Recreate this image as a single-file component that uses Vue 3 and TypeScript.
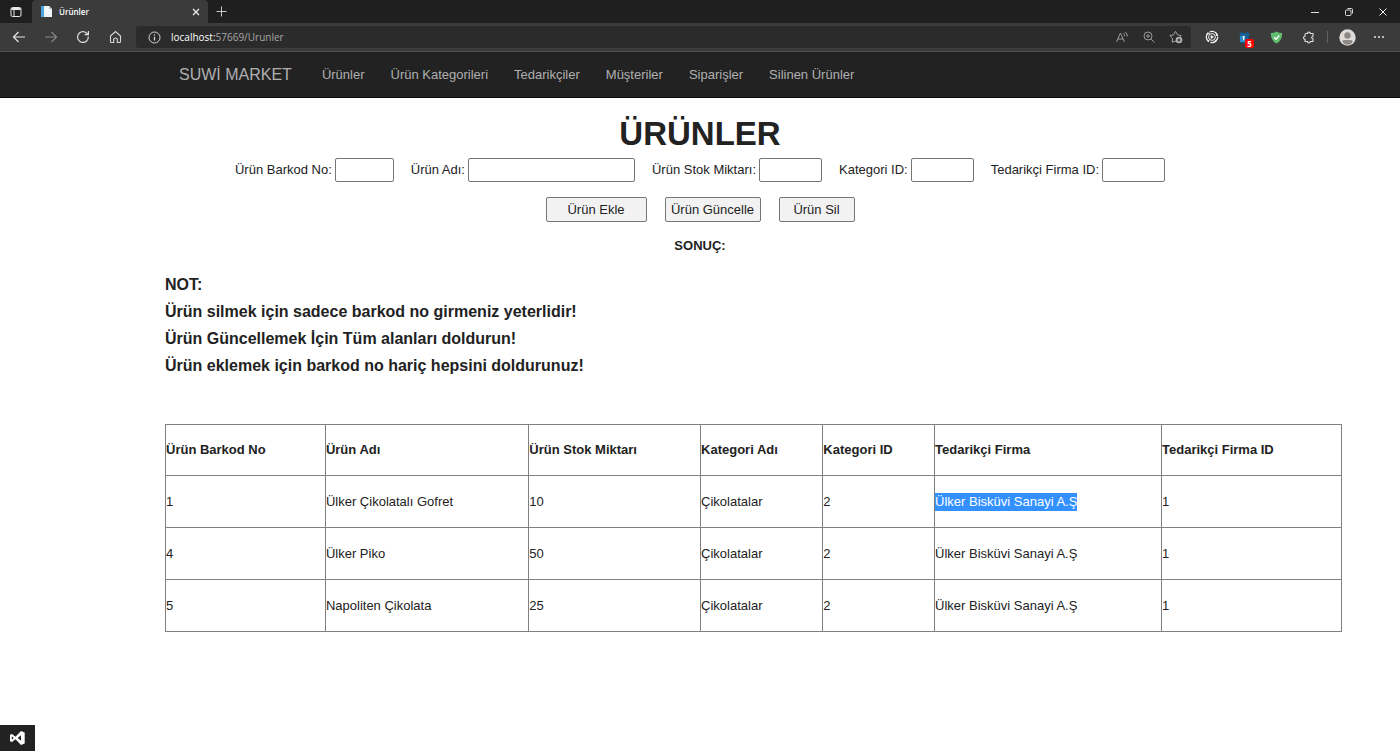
<script setup lang="ts">
import { ref } from 'vue'

interface Field {
  id: string
  label: string
  size: 'small' | 'medium' | 'large'
}

interface Product {
  barcode: number
  name: string
  stock: number
  category: string
  categoryId: number
  supplier: string
  supplierId: number
}

const navLinks: string[] = ['Ürünler', 'Ürün Kategorileri', 'Tedarikçiler', 'Müşteriler', 'Siparişler', 'Silinen Ürünler']

const fields: Field[] = [
  { id: 'barkod', label: 'Ürün Barkod No:', size: 'small' },
  { id: 'ad', label: 'Ürün Adı:', size: 'large' },
  { id: 'stok', label: 'Ürün Stok Miktarı:', size: 'medium' },
  { id: 'kategori', label: 'Kategori ID:', size: 'medium' },
  { id: 'firma', label: 'Tedarikçi Firma ID:', size: 'medium' },
]

const values = ref<Record<string, string>>({ barkod: '', ad: '', stok: '', kategori: '', firma: '' })

const notes: string[] = [
  'NOT:',
  'Ürün silmek için sadece barkod no girmeniz yeterlidir!',
  'Ürün Güncellemek İçin Tüm alanları doldurun!',
  'Ürün eklemek için barkod no hariç hepsini doldurunuz!',
]

const headers: string[] = ['Ürün Barkod No', 'Ürün Adı', 'Ürün Stok Miktarı', 'Kategori Adı', 'Kategori ID', 'Tedarikçi Firma', 'Tedarikçi Firma ID']

const products: Product[] = [
  { barcode: 1, name: 'Ülker Çikolatalı Gofret', stock: 10, category: 'Çikolatalar', categoryId: 2, supplier: 'Ülker Bisküvi Sanayi A.Ş', supplierId: 1 },
  { barcode: 4, name: 'Ülker Piko', stock: 50, category: 'Çikolatalar', categoryId: 2, supplier: 'Ülker Bisküvi Sanayi A.Ş', supplierId: 1 },
  { barcode: 5, name: 'Napoliten Çikolata', stock: 25, category: 'Çikolatalar', categoryId: 2, supplier: 'Ülker Bisküvi Sanayi A.Ş', supplierId: 1 },
]

const highlighted = 1
</script>

<template>
  <div class="window">
    <div class="tabstrip">
      <button class="tab-actions" aria-label="Sekme eylemleri">
        <svg width="12" height="12" viewBox="0 0 12 12" fill="none" stroke="#e8e8e8">
          <rect x="1" y="1.5" width="10" height="9" rx="1.5" />
          <path d="M1.5 3h9" stroke-width="2" />
          <path d="M4 3v7.5" />
        </svg>
      </button>
      <div class="tab">
        <svg width="13" height="13" viewBox="0 0 13 13">
          <path d="M1 1h8l3 3v8H1z" fill="#eef3f8" />
          <path d="M1 1h3v11H1z" fill="#4ba3dc" />
          <path d="M9 1v3h3z" fill="#b9c6d2" />
          <path d="M5.500 3.500h2M5.500 5.500h4M5.500 7.500h4" stroke="#fff" />
        </svg>
        <span class="tab-title">Ürünler</span>
        <button class="tab-close" aria-label="Sekmeyi kapat">
          <svg width="8" height="8" viewBox="0 0 8 8" stroke="#f0f0f0" stroke-width="1.200"><path d="M1 1l6 6M7 1L1 7" /></svg>
        </button>
      </div>
      <button class="new-tab" aria-label="Yeni sekme">
        <svg width="11" height="11" viewBox="0 0 11 11" stroke="#c8c8c8"><path d="M5.500 0.500v10M0.500 5.500h10" /></svg>
      </button>
      <div class="window-buttons">
        <button aria-label="Simge durumuna küçült">
          <svg width="8" height="8" viewBox="0 0 8 8" stroke="#e4e4e4"><path d="M0 4.500h8" /></svg>
        </button>
        <button aria-label="Geri yükle">
          <svg width="8" height="8" viewBox="0 0 8 8" fill="none" stroke="#d8d8d8">
            <rect x="0.500" y="2" width="5.500" height="5.500" rx="1" />
            <path d="M2.500 0.500h4q1 0 1 1v4" />
          </svg>
        </button>
        <button aria-label="Kapat">
          <svg width="8" height="8" viewBox="0 0 8 8" stroke="#f0f0f0"><path d="M0.500 0.500l7 7M7.500 0.500l-7 7" /></svg>
        </button>
      </div>
    </div>

    <div class="toolbar">
      <button class="tool" aria-label="Geri">
        <svg width="14" height="12" viewBox="0 0 14 12" fill="none" stroke="#e6e6e6" stroke-width="1.200"><path d="M13 6H1.500M6.500 1l-5 5 5 5" /></svg>
      </button>
      <button class="tool" aria-label="İleri">
        <svg width="14" height="12" viewBox="0 0 14 12" fill="none" stroke="#858585" stroke-width="1.200"><path d="M1 6h11.500M7.500 1l5 5-5 5" /></svg>
      </button>
      <button class="tool" aria-label="Yenile">
        <svg width="14" height="14" viewBox="0 0 14 14" fill="none" stroke="#e0e0e0" stroke-width="1.200">
          <path d="M12.300 6.500A5.400 5.400 0 1 1 10.500 3L12.300 4.600" />
          <path d="M12.400 1v3.700H8.700" />
        </svg>
      </button>
      <button class="tool" aria-label="Giriş">
        <svg width="13" height="14" viewBox="0 0 13 14" fill="none" stroke="#d8d8d8" stroke-width="1.100">
          <path d="M1.500 6L6.500 1.500 11.500 6v5.500q0 1-1 1H8.300V9.300Q8.300 8 6.500 8T4.700 9.300v3.200H2.500q-1 0-1-1z" />
        </svg>
      </button>

      <div class="address">
        <svg class="info" width="13" height="13" viewBox="0 0 13 13" fill="none" stroke="#d8d8d8">
          <circle cx="6.500" cy="6.500" r="5.500" />
          <path d="M6.500 5.700v3.800M6.500 3.300v1.300" stroke-width="1.200" />
        </svg>
        <div class="url" role="textbox" aria-label="Adres" contenteditable="true"><span class="host">localhost:</span><span>57669/Urunler</span></div>
        <button class="inner-tool" aria-label="Sesli oku">
          <svg width="14" height="13" viewBox="0 0 14 13" fill="none" stroke="#999">
            <path d="M1.500 11L5.500 2l4 9M2.800 8h5.400M8.500 2.200q1.300 1 1.200 3M10.300 1q2.200 1.500 2 4.500" />
          </svg>
        </button>
        <button class="inner-tool" aria-label="Yakınlaştır">
          <svg width="12" height="12" viewBox="0 0 12 12" fill="none" stroke="#999">
            <circle cx="5" cy="5" r="4" />
            <path d="M8 8l3.500 3.500M3 5h4M5 3v4" />
          </svg>
        </button>
        <button class="inner-tool" aria-label="Sık kullanılanlara ekle">
          <svg width="14" height="14" viewBox="0 0 14 14" fill="none" stroke="#a4a4a4">
            <path d="M7 11L3.200 12.200 3.500 8.500 1 5.500l3.700-.7L6.500 1.300l2 3.500 3.700.7-1.200 1.300" />
            <circle cx="10" cy="10" r="3.300" fill="#b4b4b4" stroke="none" />
            <path d="M8.300 10h3.400M10 8.300v3.400" stroke="#2b2b2b" />
          </svg>
        </button>
      </div>

      <div class="extensions">
        <button class="tool" aria-label="Video uzantısı">
          <svg width="14" height="14" viewBox="0 0 14 14" fill="none" stroke="#f2f2f2">
            <circle cx="7" cy="7" r="5.700" stroke-width="1.300" stroke-dasharray="10.400 1.540" />
            <circle cx="7" cy="7" r="3.400" />
            <path d="M5.800 5l3.200 2-3.200 2z" fill="#fff" stroke="none" />
            <path d="M2 4.500l3-1.500M11 3l.8 3M2.500 11l2-.8M9.500 11.200l2.500-1.700" />
          </svg>
        </button>
        <button class="tool badge-host" aria-label="Uzantı, 5 bildirim">
          <svg width="13" height="13" viewBox="0 0 13 13">
            <path d="M1 3l3-2 2.500 1.500L9 1l3 2-1.500 3v6h-8V6z" fill="#175f91" />
            <path d="M2 5h5v6H2z" fill="#248ccb" />
            <path d="M4.500 5.500l2-1V8L5 10V7z" fill="#fff" />
          </svg>
          <span class="badge">5</span>
        </button>
        <button class="tool" aria-label="Koruma">
          <svg width="13" height="13" viewBox="0 0 13 13">
            <path d="M6.500.5Q9 2 12.200 2 12.500 9.500 6.500 12.500.5 9.500.8 2 4 2 6.500.5z" fill="#62bd70" />
            <path d="M4 6.300l2 2 3.300-3.800" fill="none" stroke="#fff" stroke-width="1.300" />
          </svg>
        </button>
        <button class="tool" aria-label="Uzantılar">
          <svg width="13" height="13" viewBox="0 0 13 13" fill="none" stroke="#dedede" stroke-width="1.100">
            <path d="M4 2.500h1.500a1.400 1.400 0 0 1 2.800 0H11v2.700a1.300 1.300 0 0 0 0 2.600v2.700H8.300a1.400 1.400 0 0 1-2.800 0H3V8.300a1.500 1.500 0 0 1 0-3V3.500q0-1 1-1z" />
          </svg>
        </button>
        <span class="separator"></span>
        <button class="tool" aria-label="Profil">
          <svg width="17" height="17" viewBox="0 0 17 17">
            <circle cx="8.500" cy="8.500" r="8.200" fill="#dedbd8" />
            <circle cx="8.500" cy="6.500" r="3.200" fill="#8d8986" />
            <path d="M3.500 12.500q0-1.500 1.500-1.500h7q1.500 0 1.500 1.500-1.500 3.300-5 3.300t-5-3.300z" fill="#8d8986" />
          </svg>
        </button>
        <button class="tool" aria-label="Ayarlar">
          <svg width="12" height="4" viewBox="0 0 12 4" fill="#e6e6e6"><circle cx="2" cy="2" r="1" /><circle cx="6" cy="2" r="1" /><circle cx="10" cy="2" r="1" /></svg>
        </button>
      </div>
    </div>

    <nav class="navbar">
      <div class="container nav-inner">
        <a class="brand" href="#">SUWİ MARKET</a>
        <a v-for="link in navLinks" :key="link" href="#">{{ link }}</a>
      </div>
    </nav>

    <main class="container">
      <h1>ÜRÜNLER</h1>
      <form @submit.prevent>
        <div class="fields">
          <div v-for="field in fields" :key="field.id" class="field">
            <label :for="field.id">{{ field.label }}</label>
            <input :id="field.id" v-model="values[field.id]" type="text" :class="field.size" />
          </div>
        </div>
        <div class="buttons">
          <button type="submit" class="add">Ürün Ekle</button>
          <button type="button" class="update">Ürün Güncelle</button>
          <button type="button" class="remove">Ürün Sil</button>
        </div>
      </form>
      <p class="result">SONUÇ:</p>
      <div class="notes">
        <p v-for="note in notes" :key="note">{{ note }}</p>
      </div>
      <table>
        <colgroup>
          <col class="c-barcode" /><col class="c-name" /><col class="c-stock" /><col class="c-category" /><col class="c-category-id" /><col class="c-supplier" /><col />
        </colgroup>
        <thead>
          <tr><th v-for="header in headers" :key="header" scope="col">{{ header }}</th></tr>
        </thead>
        <tbody>
          <tr v-for="product in products" :key="product.barcode">
            <td>{{ product.barcode }}</td>
            <td>{{ product.name }}</td>
            <td>{{ product.stock }}</td>
            <td>{{ product.category }}</td>
            <td>{{ product.categoryId }}</td>
            <td><span :class="{ selected: product.barcode === highlighted }">{{ product.supplier }}</span></td>
            <td>{{ product.supplierId }}</td>
          </tr>
        </tbody>
      </table>
    </main>

    <button class="vs-button" aria-label="Visual Studio">
      <svg width="17" height="16" viewBox="0 0 17 16" fill="#fff" fill-rule="evenodd">
        <path d="M1 4.800L3 4l3.500 2.800L12 1l3.700 1.500v11L12 15 6.500 9.200 3 12l-2-.8zM2.800 6.200v3.600L4.800 8zM12 5.200v5.600L8.700 8z" />
      </svg>
    </button>
  </div>
</template>

<style>
body {
  background: #fff;
}
</style>

<style scoped>
* {
  box-sizing: border-box;
}
.window {
  min-height: 100vh;
  font-family: "Liberation Sans", Arial, sans-serif;
  font-size: 13px;
  line-height: 18px;
  color: #222;
}
button {
  font: inherit;
}
svg {
  display: block;
  flex: none;
}

/* Browser frame */
.tabstrip,
.toolbar {
  display: flex;
  align-items: center;
  font-family: "Open Sans", "Noto Sans", sans-serif;
}
.tabstrip button,
.toolbar button {
  display: flex;
  align-items: center;
  justify-content: center;
  flex: none;
  padding: 0;
  border: 0;
  background: none;
}
.tabstrip {
  height: 23px;
  background: #1f1f1f;
}
.tabstrip .tab-actions {
  width: 32px;
}
.tab {
  display: flex;
  align-items: center;
  gap: 6px;
  width: 176px;
  height: 23px;
  padding: 0 7px 0 8px;
  border-radius: 4px 4px 0 0;
  background: #3b3b3b;
}
.tab-title {
  flex: 1;
  font-size: 8px;
  font-weight: 600;
  line-height: 12px;
  color: #fff;
}
.tab-close {
  width: 10px;
}
.tabstrip .new-tab {
  width: 26px;
}
.window-buttons {
  display: flex;
  margin-left: auto;
}
.window-buttons button {
  width: 34px;
  height: 23px;
}
.toolbar {
  height: 29px;
  padding: 0 5px 0 3px;
  border-bottom: 1px solid #505050;
  background: #3b3b3b;
}
.toolbar .tool {
  width: 32px;
  height: 22px;
}
.address {
  display: flex;
  flex: 1;
  align-items: center;
  height: 22px;
  margin: 0 5px;
  padding: 0 2px 0 12px;
  border-radius: 3px;
  background: #2b2b2b;
}
.url {
  flex: 1;
  padding-left: 10px;
  font-size: 10px;
  line-height: 16px;
  color: #a6a6a6;
}
.host {
  color: #fff;
}
.toolbar .inner-tool {
  width: 27px;
  height: 22px;
}
.extensions {
  display: flex;
  align-items: center;
}
.separator {
  width: 1px;
  height: 12px;
  margin: 0 3px;
  background: #626262;
}
.badge-host {
  position: relative;
}
.badge {
  position: absolute;
  right: 6px;
  bottom: 0;
  width: 9px;
  height: 9px;
  border-radius: 2px;
  background: #f00;
  color: #fff;
  font-size: 8px;
  font-weight: 700;
  line-height: 9px;
  text-align: center;
}

/* Site */
.container {
  width: 1070px;
  max-width: 100%;
  margin: 0 auto;
}
.navbar {
  height: 46px;
  border-bottom: 1px solid #080808;
  background: #222;
}
.nav-inner {
  display: flex;
  align-items: center;
  gap: 26px;
  height: 45px;
  padding-left: 14px;
}
.nav-inner a {
  color: #b0b0b0;
  text-decoration: none;
}
.nav-inner .brand {
  margin-right: 4px;
  font-size: 16px;
}
h1 {
  margin: 17px 0 5px;
  font-size: 33px;
  line-height: 38px;
  text-align: center;
}
.fields,
.buttons {
  display: flex;
  justify-content: center;
}
.fields {
  gap: 17px;
}
.field {
  display: flex;
  align-items: center;
  gap: 3px;
}
.field label {
  white-space: nowrap;
}
.field input {
  height: 24px;
  padding: 1px 2px;
  border: 1px solid #767676;
  border-radius: 2px;
  background: #fff;
  font: inherit;
}
.small {
  width: 59px;
}
.medium {
  width: 63px;
}
.large {
  width: 167px;
}
.buttons {
  gap: 18px;
  margin-top: 15px;
}
.buttons button {
  height: 25px;
  padding: 0;
  border: 1px solid #767676;
  border-radius: 2px;
  background: #f2f2f2;
  color: #222;
}
.add {
  width: 101px;
}
.update {
  width: 96px;
}
.remove {
  width: 76px;
}
.result {
  margin: 15px 0 16px;
  font-weight: 700;
  text-align: center;
}
.notes {
  font-size: 16px;
  font-weight: 700;
  line-height: 27px;
}
.notes p {
  margin: 0;
}
table {
  width: 110%;
  margin-top: 45px;
  border-collapse: collapse;
  table-layout: fixed;
}
th,
td {
  height: 52px;
  padding: 0;
  border: 1px solid #808080;
  text-align: left;
}
th {
  height: 51px;
}
.c-barcode {
  width: 13.6%;
}
.c-name {
  width: 17.3%;
}
.c-stock {
  width: 14.6%;
}
.c-category {
  width: 10.4%;
}
.c-category-id {
  width: 9.5%;
}
.c-supplier {
  width: 19.3%;
}
.selected {
  display: inline-block;
  background: #3390ff;
  color: #fff;
}
.vs-button {
  position: fixed;
  bottom: 0;
  left: 0;
  display: flex;
  align-items: center;
  justify-content: center;
  width: 35px;
  height: 26px;
  padding: 0;
  border: 0;
  background: #222;
}
</style>
